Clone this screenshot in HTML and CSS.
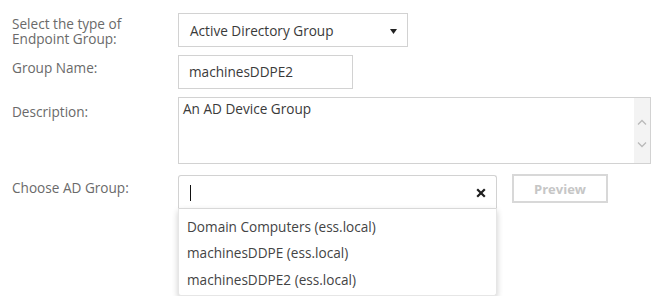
FILE: index.html
```html
<!DOCTYPE html>
<html>
<head>
<meta charset="utf-8">
<link rel="stylesheet" href="styles.css">
</head>
<body>
<form class="form">
  <div class="row row-type">
    <label class="label label-two">Select the type of<br>Endpoint Group:</label>
    <div class="select">
      <span class="select-text">Active Directory Group</span>
      <svg class="caret" width="7" height="5" viewBox="0 0 7 5"><path d="M0 0H7L3.5 5Z" fill="#222"/></svg>
    </div>
  </div>
  <div class="row row-name">
    <label class="label">Group Name:</label>
    <div class="input">machinesDDPE2</div>
  </div>
  <div class="row row-desc">
    <label class="label label-desc">Description:</label>
    <div class="textarea">
      <div class="ta-text">An AD Device Group</div>
      <div class="ta-scroll">
        <svg width="10" height="6" viewBox="0 0 10 6"><path d="M1 5.5L5 1.5L9 5.5" fill="none" stroke="#b9b9b9" stroke-width="1.3"/></svg>
        <svg width="10" height="6" viewBox="0 0 10 6"><path d="M1 0.5L5 4.5L9 0.5" fill="none" stroke="#b9b9b9" stroke-width="1.3"/></svg>
      </div>
    </div>
  </div>
  <div class="row row-ad">
    <label class="label">Choose AD Group:</label>
    <div class="combo">
      <div class="combo-input">
        <span class="cursor"></span>
        <svg class="clear" width="10" height="10" viewBox="0 0 10 10"><path d="M1.2 1.2L8.8 8.8M8.8 1.2L1.2 8.8" stroke="#1e1e1e" stroke-width="2.2"/></svg>
      </div>
      <ul class="menu">
        <li>Domain Computers (ess.local)</li>
        <li>machinesDDPE (ess.local)</li>
        <li>machinesDDPE2 (ess.local)</li>
      </ul>
    </div>
    <button type="button" class="preview">Preview</button>
  </div>
</form>
</body>
</html>
```
FILE: styles.css
```css
html, body {
  margin: 0;
  padding: 0;
  background: #fff;
}
body {
  font-family: "Open Sans", "Liberation Sans", sans-serif;
  font-size: 13.6px;
  color: #3a3a3a;
}
.form {
  padding-top: 13px;
}
.row {
  display: flex;
  align-items: flex-start;
}
.label {
  width: 166px;
  padding-left: 12px;
  color: #6a6a6a;
  line-height: 18px;
  padding-top: 4px;
  flex: none;
}
.label-two {
  line-height: 15px;
  padding-top: 3px;
}
.label-desc {
  padding-top: 6px;
}
.row-name { margin-top: 8px; }
.row-desc { margin-top: 8px; }
.row-ad { margin-top: 11px; }

.select {
  box-sizing: border-box;
  width: 230px;
  height: 34px;
  border: 1px solid #d2d2d2;
  display: flex;
  align-items: center;
  padding: 1px 0 0 11px;
}
.select-text { flex: 1; }
.caret {
  margin-right: 10px;
  margin-top: 2px;
}
.input {
  box-sizing: border-box;
  width: 175px;
  height: 34px;
  border: 1px solid #d2d2d2;
  padding: 7px 0 0 10px;
  line-height: 18px;
}
.textarea {
  box-sizing: border-box;
  width: 473px;
  height: 67px;
  border: 1px solid #d2d2d2;
  display: flex;
}
.ta-text {
  flex: 1;
  padding: 2px 4px;
  line-height: 18px;
}
.ta-scroll {
  width: 16px;
  background: #f3f3f3;
  display: flex;
  flex-direction: column;
  align-items: center;
  justify-content: center;
  gap: 17px;
  padding-top: 6px;
  box-sizing: border-box;
}
.combo {
  width: 319px;
  display: flex;
  flex-direction: column;
}
.combo-input {
  box-sizing: border-box;
  height: 34px;
  border: 1px solid #d2d2d2;
  border-bottom-color: #e4e4e4;
  border-radius: 3px 3px 0 0;
  display: flex;
  align-items: center;
  justify-content: space-between;
  padding: 0 10px 0 11px;
}
.cursor {
  width: 1px;
  height: 16px;
  background: #111;
  margin-top: 1px;
}
.clear { margin-top: 2px; }
.menu {
  margin: -1px 0 0;
  padding: 5px 0 2px;
  list-style: none;
  background: #fff;
  border: 1px solid #e6e6e6;
  border-top-color: #d8d8d8;
  border-radius: 0 0 3px 3px;
  box-shadow: 0 3px 6px rgba(0,0,0,0.2);
}
.menu li {
  padding-left: 8px;
  line-height: 26.3px;
  color: #444;
}
.preview {
  margin-left: 15px;
  margin-top: -1px;
  width: 96px;
  height: 29px;
  box-sizing: border-box;
  background: #fff;
  border: 2px solid #d8d8d8;
  color: #c6c6c6;
  font-family: "Open Sans", "Liberation Sans", sans-serif;
  font-size: 13px;
  font-weight: 700;
  padding: 0;
}
```
